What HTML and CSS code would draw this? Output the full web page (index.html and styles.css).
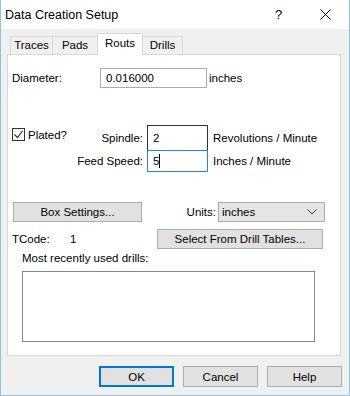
FILE: index.html
```html
<!DOCTYPE html>
<html>
<head>
  <meta charset="UTF-8">
  <title>Data Creation Setup</title>
  <link rel="stylesheet" href="styles.css">
</head>
<body>
  <div class="window">
    <div class="titlebar">
      <span class="title">Data Creation Setup</span>
      <span class="help-btn">?</span>
      <span class="close-btn">
        <svg width="11" height="11" viewBox="0 0 11 11"><path d="M0.5 0.5 L10.5 10.5 M10.5 0.5 L0.5 10.5" stroke="#000" stroke-width="1" fill="none"/></svg>
      </span>
    </div>

    <div class="tabs">
      <div class="tab traces">Traces</div>
      <div class="tab pads">Pads</div>
      <div class="tab routs active">Routs</div>
      <div class="tab drills">Drills</div>
    </div>

    <div class="panel">
      <div class="row diameter-row">
        <label class="lbl-diameter">Diameter:</label>
        <div class="field diameter">0.016000</div>
        <span class="unit">inches</span>
      </div>

      <div class="row plated-row">
        <div class="check">
          <span class="box">
            <svg width="11" height="11" viewBox="0 0 11 11"><path d="M1.5 5.5 L4.5 8.5 L9.5 2" stroke="#333" stroke-width="1.2" fill="none"/></svg>
          </span>
          <span>Plated?</span>
        </div>
        <div class="speeds">
          <label class="rlabel">Spindle:</label>
          <div class="field speed dark">2</div>
          <span class="sunit">Revolutions / Minute</span>
          <label class="rlabel">Feed Speed:</label>
          <div class="field speed focus">5<span class="caret"></span></div>
          <span class="sunit">Inches / Minute</span>
        </div>
      </div>

      <div class="row box-row">
        <button class="btn box-btn">Box Settings...</button>
        <label class="units-lbl">Units:</label>
        <div class="select">
          <span>inches</span>
          <svg width="10" height="6" viewBox="0 0 10 6"><path d="M0.5 0.5 L5 5 L9.5 0.5" stroke="#333" stroke-width="1" fill="none"/></svg>
        </div>
      </div>

      <div class="row tcode-row">
        <span class="tcode">TCode:</span>
        <span class="tvalue">1</span>
        <button class="btn drill-btn">Select From Drill Tables...</button>
      </div>

      <div class="recent">
        <div class="recent-lbl">Most recently used drills:</div>
        <div class="listbox"></div>
      </div>
    </div>

    <div class="footer">
      <button class="btn foot default">OK</button>
      <button class="btn foot">Cancel</button>
      <button class="btn foot">Help</button>
    </div>
  </div>
</body>
</html>
```

FILE: styles.css
```css
html, body {
  margin: 0;
  padding: 0;
}
body {
  width: 350px;
  height: 396px;
  font-family: "Liberation Sans", Arial, sans-serif;
  font-size: 11.5px;
  color: #000;
  overflow: hidden;
}
.window {
  box-sizing: border-box;
  width: 350px;
  height: 396px;
  background: #f0f0f0;
  border: 1px solid #8cc3f2;
  border-top: none;
}
.titlebar {
  height: 29px;
  background: #fff;
  display: flex;
  align-items: center;
  font-size: 12.5px;
}
.title {
  padding-left: 4px;
  flex: 1;
}
.help-btn {
  width: 8px;
  margin-right: 37px;
  font-size: 13px;
}
.close-btn {
  width: 11px;
  margin-right: 18px;
  display: flex;
}

/* tab strip */
.tabs {
  display: flex;
  padding-left: 9px;
  margin-top: 4px;
  height: 21px;
  align-items: flex-end;
}
.tab {
  box-sizing: border-box;
  height: 18px;
  border: 1px solid #d9d9d9;
  border-bottom: none;
  margin-right: -1px;
  background: #f0f0f0;
  text-align: center;
  padding-top: 2px;
}
.traces { width: 43px; }
.pads { width: 46px; }
.routs { width: 46px; }
.drills { width: 41px; }
.tab.active {
  height: 22px;
  background: #fff;
  position: relative;
  z-index: 2;
  margin-bottom: -1px;
  padding-top: 3px;
}

.panel {
  box-sizing: border-box;
  margin-left: 6px;
  width: 334px;
  height: 302px;
  background: #fff;
  border: 1px solid #d9d9d9;
  padding: 13px 0 0 3px;
}
.row {
  display: flex;
  align-items: center;
}
.field {
  box-sizing: border-box;
  height: 20px;
  border: 1px solid #adadad;
  background: #fff;
  padding: 0 5px;
  display: flex;
  align-items: center;
}
.lbl-diameter {
  width: 88px;
  padding-left: 1px;
}
.diameter {
  width: 107px;
}
.unit {
  margin-left: 2px;
}
.plated-row {
  margin-top: 37px;
  align-items: flex-start;
}
.check {
  display: flex;
  align-items: center;
  width: 60px;
  margin-top: 3px;
  margin-left: 1px;
}
.box {
  box-sizing: border-box;
  width: 13px;
  height: 13px;
  border: 1px solid #333;
  display: flex;
  align-items: center;
  justify-content: center;
  margin-right: 3px;
}
.speeds {
  display: grid;
  grid-template-columns: 75px 61px auto;
  align-items: center;
}
.rlabel {
  text-align: right;
  padding-right: 4px;
  white-space: nowrap;
}
.speed {
  width: 61px;
  height: 25px;
}
.sunit {
  margin-left: 5px;
}
.field.dark {
  border-color: #333;
  border-bottom: none;
}
.field.focus {
  border-color: #2a84d6;
  height: 22px;
}
.caret {
  display: inline-block;
  width: 1px;
  height: 14px;
  background: #000;
}

.btn {
  box-sizing: border-box;
  font-family: inherit;
  font-size: 11.5px;
  color: #000;
  background: #e1e1e1;
  border: 1px solid #adadad;
  height: 20px;
  padding: 0;
}
.box-row {
  margin-top: 30px;
}
.box-btn {
  width: 129px;
  margin-left: 2px;
}
.units-lbl {
  width: 76px;
  text-align: right;
  padding-right: 2px;
  box-sizing: border-box;
}
.select {
  box-sizing: border-box;
  width: 107px;
  height: 20px;
  background: #e5e5e5;
  border: 1px solid #acacac;
  display: flex;
  align-items: center;
  justify-content: space-between;
  padding: 0 7px 0 3px;
}
.tcode-row {
  margin-top: 7px;
}
.tcode {
  width: 58px;
  margin-left: 1px;
}
.tvalue {
  width: 87px;
}
.drill-btn {
  width: 166px;
}
.recent {
  margin-left: 11px;
  margin-top: 3px;
}
.recent-lbl {
  height: 19px;
}
.listbox {
  box-sizing: border-box;
  width: 293px;
  height: 71px;
  border: 1px solid #828790;
  background: #fff;
}
.footer {
  display: flex;
  justify-content: flex-end;
  gap: 9px;
  padding: 10px 7px 0 0;
}
.foot {
  width: 75px;
  height: 21px;
}
.foot.default {
  border: 2px solid #0078d7;
}
```
